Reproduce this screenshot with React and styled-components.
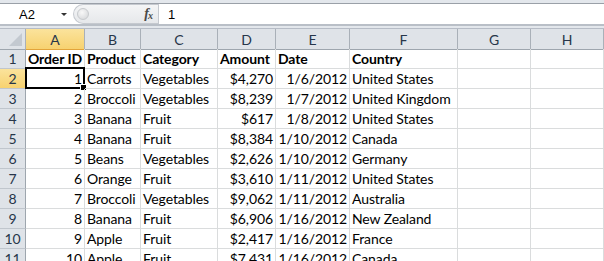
import React from 'react'
import styled, { createGlobalStyle } from 'styled-components';

const GlobalStyle = createGlobalStyle`
  html, body {
    margin: 0;
    padding: 0;
    overflow: hidden;
    background: #ffffff;
  }
  * { box-sizing: border-box; }
`;

const Window = styled.div`
  width: 604px;
  height: 261px;
  overflow: hidden;
  background: #e3e7ec;
  font-family: "Lato", "Liberation Sans", sans-serif;
`;

const FormulaBar = styled.div`
  display: flex;
  height: 29px;
  padding-top: 3px;
  border-bottom: 1px solid #b6bcc6;
  background: #e3e7ec;

  .inner {
    flex: 1;
    display: flex;
    align-items: center;
    height: 23px;
    background: #ffffff;
    border-top: 1px solid #9aa0a8;
    border-bottom: 2px solid #b9bfc7;
  }
`;

const NameBox = styled.div`
  width: 73px;
  height: 100%;
  display: flex;
  align-items: center;
  justify-content: space-between;
  padding: 0 6px 0 19px;
  font-family: "Liberation Sans", Arial, sans-serif;
  font-size: 13px;
  color: #000;

  .arrow {
    width: 0;
    height: 0;
    border-left: 3.5px solid transparent;
    border-right: 3.5px solid transparent;
    border-top: 3.5px solid #333;
    margin-top: 1px;
  }
`;

const Pill = styled.div`
  width: 85px;
  height: 20px;
  display: flex;
  align-items: center;
  justify-content: space-between;
  padding: 0 6px 0 3px;
  border: 1px solid #c5c9cf;
  border-right: none;
  border-radius: 10px 0 0 10px;
  background: linear-gradient(#f4f5f6, #e6e8eb);

  .grip {
    width: 12px;
    height: 12px;
    border-radius: 50%;
    background: radial-gradient(circle at 40% 35%, #f8f8f8, #d2d4d7);
    border: 1px solid #c7cacd;
  }
  .fx {
    font-family: "Liberation Serif", "DejaVu Serif", serif;
    font-style: italic;
    font-weight: bold;
    font-size: 14px;
    color: #4a4a4a;
    letter-spacing: -1px;
  }
  .fx sub {
    font-size: 10px;
    vertical-align: -1px;
  }
`;

const FormulaInput = styled.div`
  flex: 1;
  height: 100%;
  display: flex;
  align-items: center;
  padding-left: 9px;
  border-left: 1px solid #c5c9cf;
  font-family: "Liberation Sans", Arial, sans-serif;
  font-size: 13px;
  color: #000;
`;

const cols = '26px 59px 56px 77px 58px 74px 108px 73px 1fr';

const Grid = styled.div`
  display: grid;
  grid-template-columns: ${cols};
  grid-auto-rows: 20px;
  background: #ffffff;
`;

const ColHead = styled.div`
  height: 21px;
  display: flex;
  align-items: center;
  justify-content: center;
  font-size: 14px;
  color: #27364a;
  border-right: 1px solid #a9b0b8;
  border-bottom: 1px solid #9ea6ae;
  background: ${p => p.$sel ? 'linear-gradient(#fbe39c, #f7d270)' : '#dfe3e8'};
  ${p => p.$sel && 'border-bottom-color: #e2a43a;'}
`;

const Corner = styled(ColHead)`
  position: relative;
  &::after {
    content: '';
    position: absolute;
    right: 3px;
    bottom: 3px;
    border-left: 13px solid transparent;
    border-bottom: 13px solid #c3c9d0;
  }
`;

const RowHead = styled.div`
  display: flex;
  align-items: center;
  justify-content: center;
  font-size: 14px;
  color: #27364a;
  border-right: 1px solid #9ea6ae;
  border-bottom: 1px solid #c0c6cd;
  background: ${p => p.$sel ? 'linear-gradient(#fbe39c, #f7d270)' : '#dfe3e8'};
  ${p => p.$sel && 'border-right-color: #e2a43a;'}
`;

const Cell = styled.div`
  position: relative;
  display: flex;
  align-items: flex-end;
  justify-content: ${p => p.$right ? 'flex-end' : 'flex-start'};
  padding: 0 2px 0 2px;
  font-size: 14px;
  letter-spacing: -0.1px;
  line-height: 18px;
  font-weight: ${p => p.$bold ? 700 : 400};
  color: #000;
  white-space: nowrap;
  border-right: 1px solid #dadcdd;
  border-bottom: 1px solid #dadcdd;

  ${p => p.$active && `
    &::before {
      content: '';
      position: absolute;
      left: -1px;
      top: -2px;
      right: -1px;
      bottom: -1px;
      border: 2px solid #000;
    }
    &::after {
      content: '';
      position: absolute;
      right: -3px;
      bottom: -3px;
      width: 5px;
      height: 5px;
      background: #000;
      border: 1px solid #fff;
    }
  `}
`;

const letters = ['A', 'B', 'C', 'D', 'E', 'F', 'G', 'H'];

const rows = [
  ['Order ID', 'Product', 'Category', 'Amount', 'Date', 'Country'],
  [1, 'Carrots', 'Vegetables', '$4,270', '1/6/2012', 'United States'],
  [2, 'Broccoli', 'Vegetables', '$8,239', '1/7/2012', 'United Kingdom'],
  [3, 'Banana', 'Fruit', '$617', '1/8/2012', 'United States'],
  [4, 'Banana', 'Fruit', '$8,384', '1/10/2012', 'Canada'],
  [5, 'Beans', 'Vegetables', '$2,626', '1/10/2012', 'Germany'],
  [6, 'Orange', 'Fruit', '$3,610', '1/11/2012', 'United States'],
  [7, 'Broccoli', 'Vegetables', '$9,062', '1/11/2012', 'Australia'],
  [8, 'Banana', 'Fruit', '$6,906', '1/16/2012', 'New Zealand'],
  [9, 'Apple', 'Fruit', '$2,417', '1/16/2012', 'France'],
  [10, 'Apple', 'Fruit', '$7,431', '1/16/2012', 'Canada'],
];

const rightCols = [0, 3, 4];

function App() {
  return (
    <Window>
      <GlobalStyle />
      <FormulaBar>
        <div className="inner">
          <NameBox>
            <span>A2</span>
            <span className="arrow" />
          </NameBox>
          <Pill>
            <span className="grip" />
            <span className="fx">f<sub>x</sub></span>
          </Pill>
          <FormulaInput>1</FormulaInput>
        </div>
      </FormulaBar>
      <Grid>
        <Corner />
        {letters.map(l => (
          <ColHead key={l} $sel={l === 'A'}>{l}</ColHead>
        ))}
        {rows.map((r, i) => (
          <React.Fragment key={i}>
            <RowHead $sel={i === 1}>{i + 1}</RowHead>
            {r.map((v, j) => (
              <Cell
                key={j}
                $bold={i === 0}
                $right={i > 0 && rightCols.includes(j)}
                $active={i === 1 && j === 0}
              >
                {v}
              </Cell>
            ))}
            <Cell />
            <Cell />
          </React.Fragment>
        ))}
      </Grid>
    </Window>
  )
}

export default App;
